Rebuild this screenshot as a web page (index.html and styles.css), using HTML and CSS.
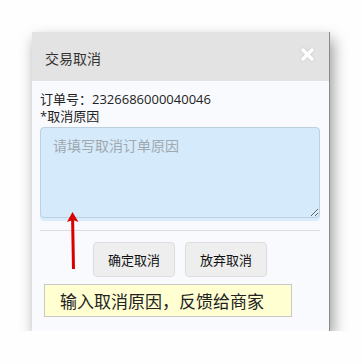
FILE: index.html
```html
<!DOCTYPE html>
<html>
<head>
  <title>交易取消</title>
  <link rel="stylesheet" href="styles.css">
</head>
<body>
  <div class="dialog">
    <div class="dialog-header">
      <span class="dialog-title">交易取消</span>
      <svg class="dialog-close" width="13" height="13" viewBox="0 0 13 13">
        <path d="M2 2 L11 11 M11 2 L2 11" stroke="#fff" stroke-width="3.4" stroke-linecap="round"/>
      </svg>
    </div>
    <div class="dialog-body">
      <div class="line">订单号：2326686000040046</div>
      <div class="line">*取消原因</div>
      <textarea class="reason" placeholder="请填写取消订单原因"></textarea>
      <div class="divider"></div>
      <div class="actions">
        <button class="btn">确定取消</button>
        <button class="btn">放弃取消</button>
      </div>
      <div class="note">输入取消原因，反馈给商家</div>
      <svg class="arrow" width="16" height="60" viewBox="0 0 16 60">
        <path d="M8.5 57 L7.6 7" stroke="#d90000" stroke-width="3" fill="none"/>
        <path d="M7.5 0 L13.5 10 L8 8 L2 10 Z" fill="#d90000"/>
      </svg>
    </div>
  </div>
</body>
</html>
```

FILE: styles.css
```css
* {
  box-sizing: border-box;
}

body {
  margin: 0;
  background: #fefefe;
  font-family: "Open Sans", "Noto Sans CJK SC", sans-serif;
  color: #222;
}

.dialog {
  margin: 32px 0 0 32px;
  width: 298px;
  background: #f9fafd;
  border-right: 1px solid #8a8a8a;
  box-shadow: 3px 7px 14px rgba(0, 0, 0, 0.4);
  position: relative;
}

.dialog-header {
  height: 49px;
  background: #e3e3e3;
  display: flex;
  align-items: center;
  justify-content: space-between;
  padding: 0 15px 0 13px;
}

.dialog-title {
  font-family: "Noto Sans CJK SC", sans-serif;
  font-size: 14px;
  color: #333;
  margin-top: 2px;
}

.dialog-close {
  margin-top: -5px;
  filter: drop-shadow(0 0 1px rgba(0, 0, 0, 0.15));
}

.dialog-body {
  padding: 10px 10px 14px 8px;
  position: relative;
}

.line {
  font-size: 13px;
  line-height: 17px;
  color: #222;
}

.reason {
  display: block;
  width: 280px;
  height: 91px;
  margin-top: 2px;
  background: #d5eafa;
  border: 1px solid #bcd0e0;
  border-radius: 4px;
  padding: 7px 12px;
  font-family: "Noto Sans CJK SC", sans-serif;
  font-size: 14px;
  box-shadow: 0 3px 0 #d9ecfb;
  resize: vertical;
}

.reason::placeholder {
  color: #a0a8b0;
}

.divider {
  height: 1px;
  background: #dcdcdc;
  margin-top: 12px;
  width: 280px;
}

.actions {
  display: flex;
  justify-content: center;
  gap: 10px;
  margin-top: 11px;
  width: 280px;
}

.btn {
  width: 82px;
  height: 35px;
  background: #eeeeee;
  border: 1px solid #dddddd;
  border-radius: 4px;
  font-family: "Noto Sans CJK SC", sans-serif;
  font-size: 13px;
  color: #111;
  padding: 0;
}

.note {
  margin: 7px 0 0 4px;
  width: 248px;
  height: 33px;
  background: #ffffd2;
  border: 1px solid #c8c8c8;
  font-family: "Noto Sans CJK SC", serif;
  font-size: 17px;
  line-height: 31px;
  padding-left: 15px;
  color: #222;
}

.arrow {
  position: absolute;
  left: 33px;
  top: 131px;
}
```
